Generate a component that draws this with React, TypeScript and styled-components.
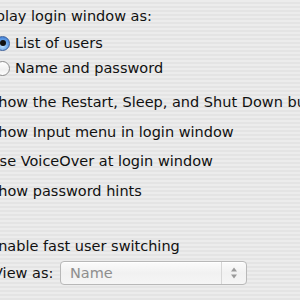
import React from "react";
import styled, { createGlobalStyle } from "styled-components";

const Global = createGlobalStyle`
  html, body { margin: 0; padding: 0; }
  body {
    width: 300px; height: 300px; overflow: hidden;
    background: repeating-linear-gradient(to bottom, #ececec 0px, #ececec 2px, #e4e4e4 2px, #e4e4e4 4px);
    font-family: "DejaVu Sans", "Liberation Sans", sans-serif;
    font-size: 14.5px;
    color: #111;
  }
`;

const Panel = styled.div`
  display: flex;
  flex-direction: column;
  margin-left: -30px;
  padding-top: 6px;
  width: 440px;
`;

const Label = styled.div<{ $indent?: number; $top?: number }>`
  margin-left: ${(p) => p.$indent ?? 0}px;
  margin-top: ${(p) => p.$top ?? 0}px;
  height: 20px;
  line-height: 20px;
  white-space: nowrap;
`;

const Row = styled.label<{ $indent?: number; $top?: number }>`
  display: flex;
  align-items: center;
  gap: 5px;
  margin-left: ${(p) => p.$indent ?? 0}px;
  margin-top: ${(p) => p.$top ?? 0}px;
  height: 20px;
  line-height: 20px;
  white-space: nowrap;
`;

const Radio = styled.span<{ $on?: boolean }>`
  width: 15px; height: 15px;
  border-radius: 50%;
  box-sizing: border-box;
  border: 1px solid ${(p) => (p.$on ? "#3a5f9a" : "#8c8c8c")};
  background: ${(p) =>
    p.$on
      ? "radial-gradient(circle at 50% 70%, #bfe2ff 0%, #6fa8e8 45%, #2f6fd0 100%)"
      : "linear-gradient(#ffffff, #f0f0f0 60%, #ffffff)"};
  display: flex; align-items: center; justify-content: center;
  flex: none;
  &::after {
    content: "";
    display: ${(p) => (p.$on ? "block" : "none")};
    width: 6px; height: 6px; border-radius: 50%;
    background: #111;
  }
`;

const Check = styled.span`
  width: 14px; height: 14px;
  box-sizing: border-box;
  border: 1px solid #8c8c8c;
  border-radius: 2px;
  background: linear-gradient(#ffffff, #f0f0f0);
  flex: none;
`;

const ViewRow = styled.div`
  display: flex;
  align-items: center;
  height: 24px;
  line-height: 20px;
  margin-left: 23px;
  margin-top: 5px;
  white-space: nowrap;
`;

const ViewLabel = styled.span`
  width: 67px;
  flex: none;
`;

const Popup = styled.div`
  width: 187px;
  height: 24px;
  box-sizing: border-box;
  border: 1px solid #b8b8b8;
  border-radius: 4px;
  background: linear-gradient(#fbfbfb, #f1f1f1 50%, #f5f5f5);
  display: flex;
  align-items: center;
  box-shadow: inset 0 1px 0 #fff;
`;

const PopupText = styled.span`
  flex: 1;
  color: #8e8e8e;
  padding-left: 9px;
`;

const Stepper = styled.span`
  width: 24px;
  align-self: stretch;
  border-left: 1px solid #d6d6d6;
  display: flex;
  align-items: center;
  justify-content: center;
`;

export default function App() {
  return (
    <>
      <Global />
      <Panel>
        <Label $indent={3}>Display login window as:</Label>
        <Row $indent={25} $top={7}>
          <Radio $on />
          List of users
        </Row>
        <Row $indent={25} $top={5}>
          <Radio />
          Name and password
        </Row>
        <Row $top={14}>
          <Check />
          Show the Restart, Sleep, and Shut Down buttons
        </Row>
        <Row $top={10}>
          <Check />
          Show Input menu in login window
        </Row>
        <Row $top={9}>
          <Check />
          Use VoiceOver at login window
        </Row>
        <Row $top={10}>
          <Check />
          Show password hints
        </Row>
        <Row $top={35}>
          <Check />
          Enable fast user switching
        </Row>
        <ViewRow>
          <ViewLabel>View as:</ViewLabel>
          <Popup>
            <PopupText>Name</PopupText>
            <Stepper>
              <svg width="8" height="14" viewBox="0 0 8 14">
                <path d="M4 1.5 L7 5.5 L1 5.5 Z" fill="#9a9a9a" />
                <path d="M4 12.5 L7 8.5 L1 8.5 Z" fill="#9a9a9a" />
              </svg>
            </Stepper>
          </Popup>
        </ViewRow>
      </Panel>
    </>
  );
}
